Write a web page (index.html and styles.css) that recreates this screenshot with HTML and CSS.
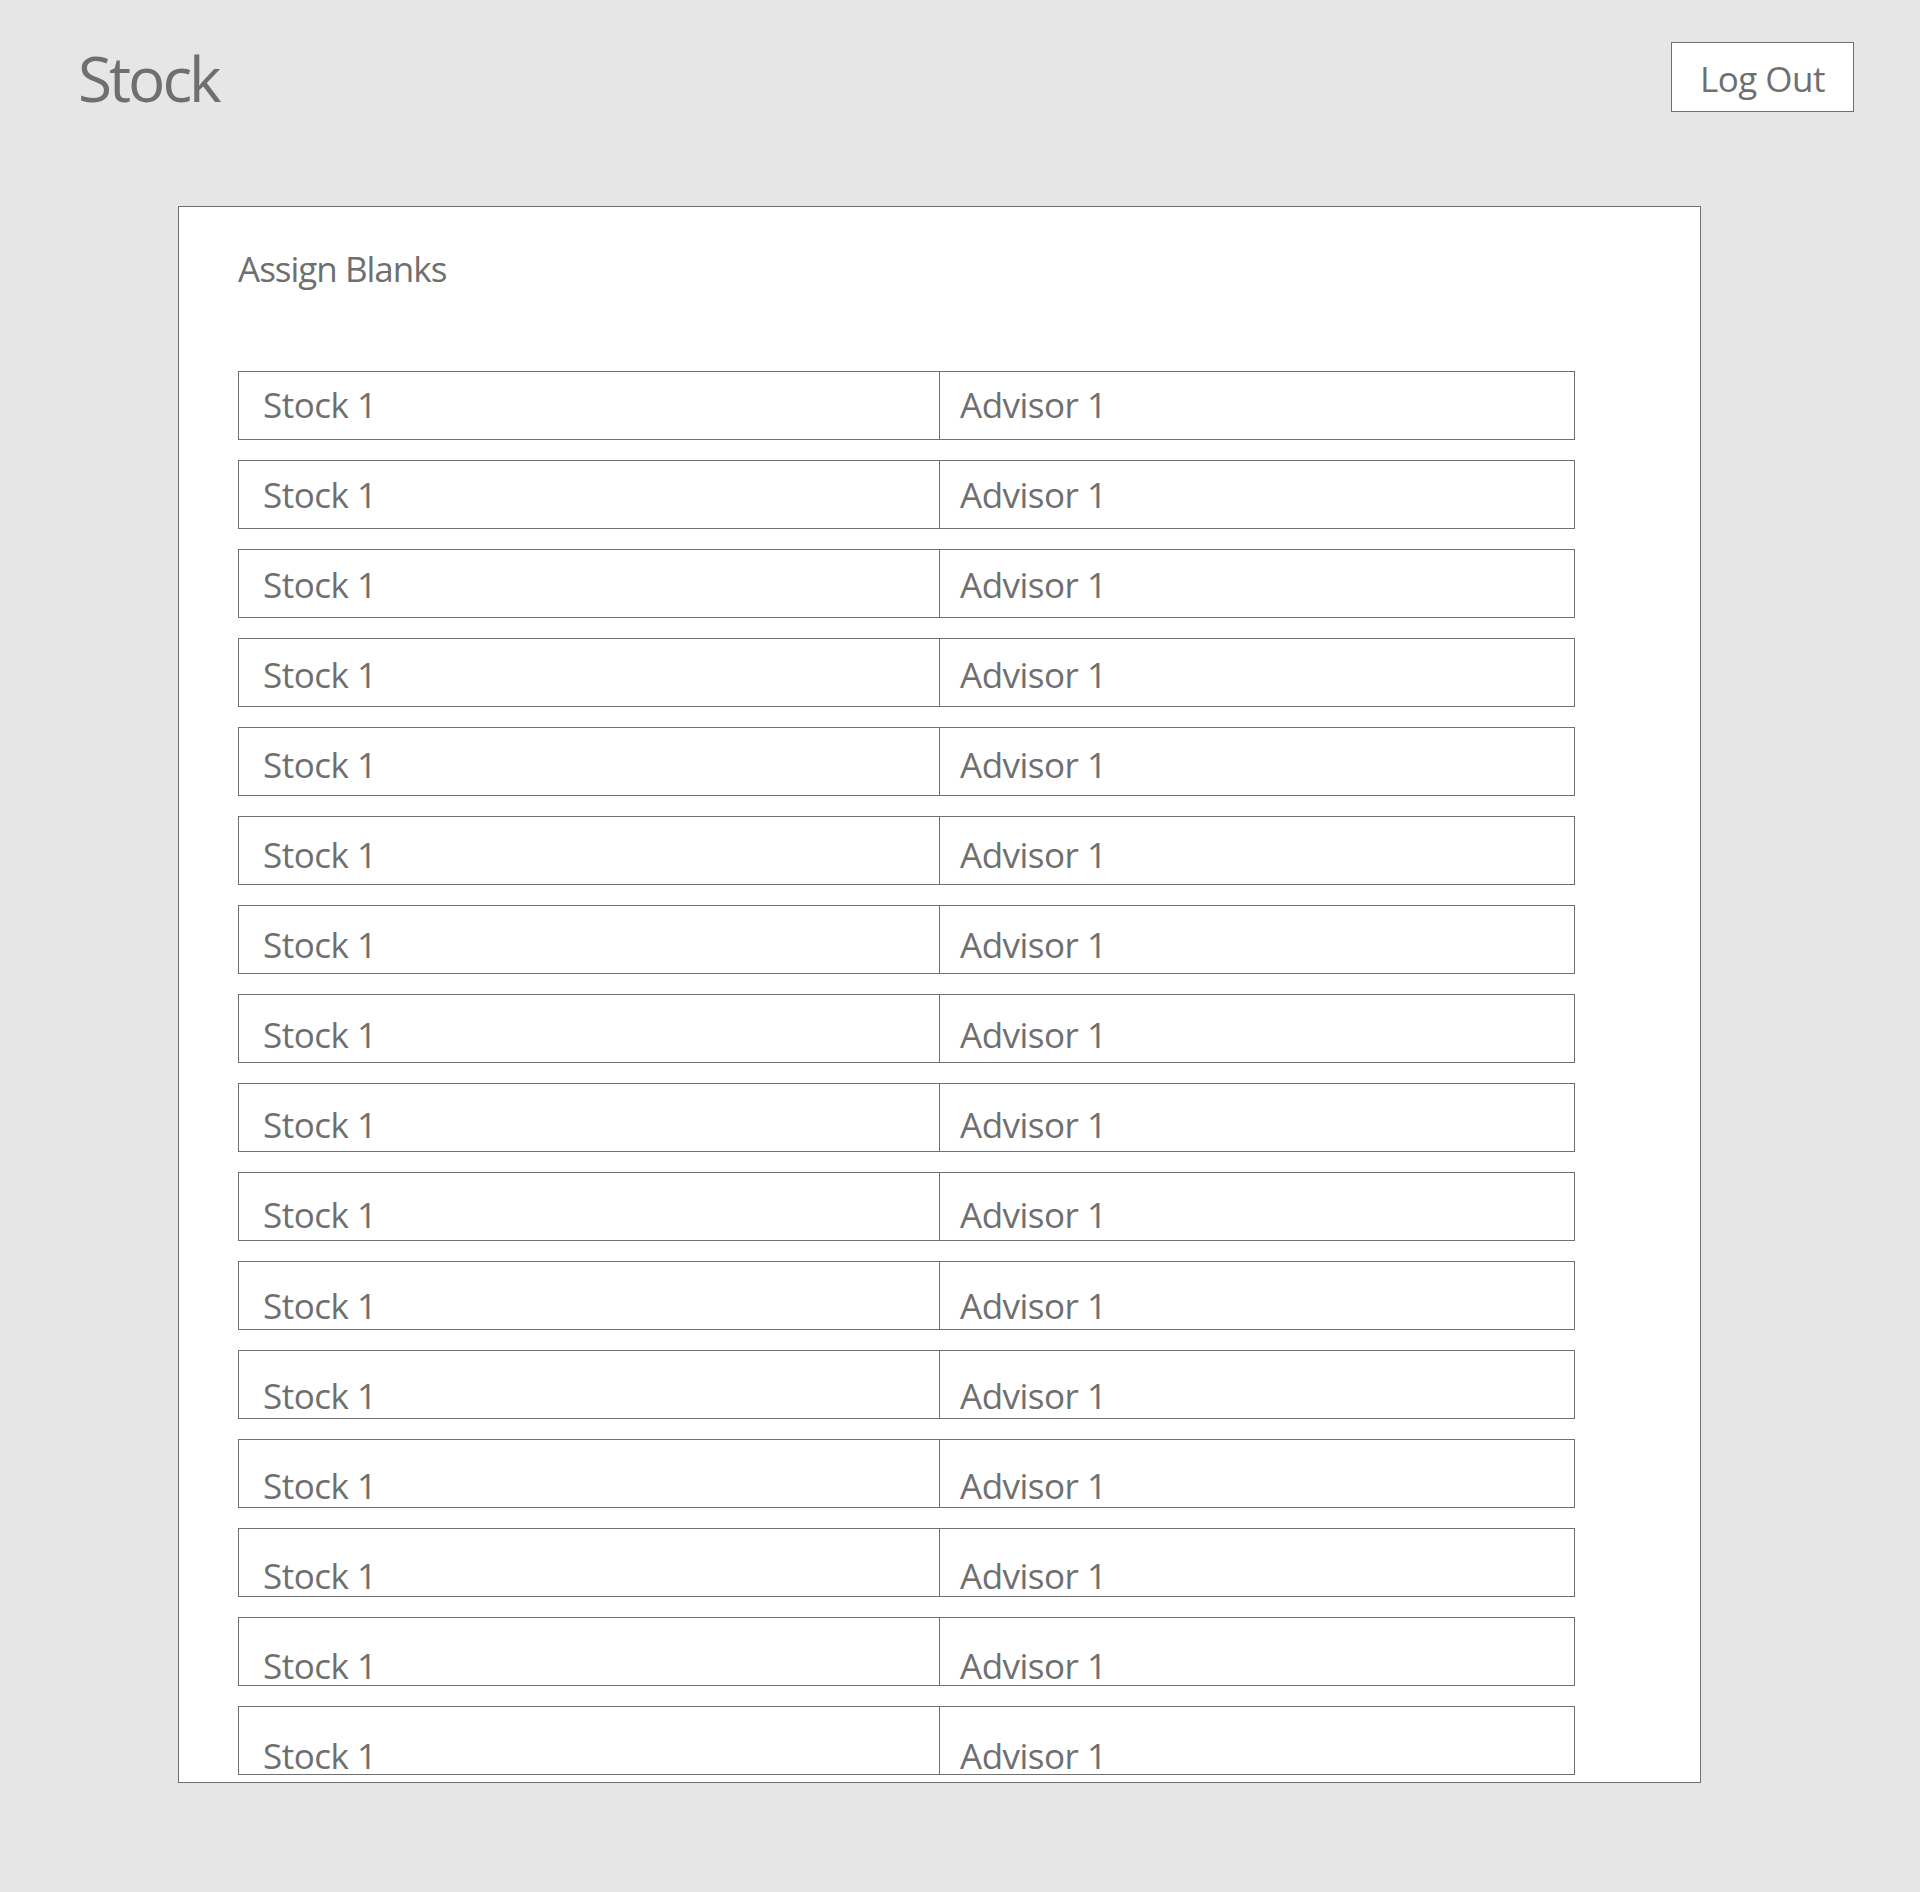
FILE: index.html
```html
<!DOCTYPE html>
<html lang="en">
<head>
<meta charset="utf-8">
<title>Stock</title>
<link rel="stylesheet" href="styles.css">
</head>
<body>
<header class="topbar">
  <h1 class="brand">Stock</h1>
  <button class="logout" type="button">Log Out</button>
</header>
<main class="panel">
  <h2 class="panel-title">Assign Blanks</h2>
  <div class="rows">
    <div class="row" style="--i:0"><div class="cell cell-stock">Stock 1</div><div class="cell cell-advisor">Advisor 1</div></div>
    <div class="row" style="--i:1"><div class="cell cell-stock">Stock 1</div><div class="cell cell-advisor">Advisor 1</div></div>
    <div class="row" style="--i:2"><div class="cell cell-stock">Stock 1</div><div class="cell cell-advisor">Advisor 1</div></div>
    <div class="row" style="--i:3"><div class="cell cell-stock">Stock 1</div><div class="cell cell-advisor">Advisor 1</div></div>
    <div class="row" style="--i:4"><div class="cell cell-stock">Stock 1</div><div class="cell cell-advisor">Advisor 1</div></div>
    <div class="row" style="--i:5"><div class="cell cell-stock">Stock 1</div><div class="cell cell-advisor">Advisor 1</div></div>
    <div class="row" style="--i:6"><div class="cell cell-stock">Stock 1</div><div class="cell cell-advisor">Advisor 1</div></div>
    <div class="row" style="--i:7"><div class="cell cell-stock">Stock 1</div><div class="cell cell-advisor">Advisor 1</div></div>
    <div class="row" style="--i:8"><div class="cell cell-stock">Stock 1</div><div class="cell cell-advisor">Advisor 1</div></div>
    <div class="row" style="--i:9"><div class="cell cell-stock">Stock 1</div><div class="cell cell-advisor">Advisor 1</div></div>
    <div class="row" style="--i:10"><div class="cell cell-stock">Stock 1</div><div class="cell cell-advisor">Advisor 1</div></div>
    <div class="row" style="--i:11"><div class="cell cell-stock">Stock 1</div><div class="cell cell-advisor">Advisor 1</div></div>
    <div class="row" style="--i:12"><div class="cell cell-stock">Stock 1</div><div class="cell cell-advisor">Advisor 1</div></div>
    <div class="row" style="--i:13"><div class="cell cell-stock">Stock 1</div><div class="cell cell-advisor">Advisor 1</div></div>
    <div class="row" style="--i:14"><div class="cell cell-stock">Stock 1</div><div class="cell cell-advisor">Advisor 1</div></div>
    <div class="row" style="--i:15"><div class="cell cell-stock">Stock 1</div><div class="cell cell-advisor">Advisor 1</div></div>
  </div>
</main>
</body>
</html>
```
FILE: styles.css
```css
* {
  box-sizing: border-box;
}

body {
  margin: 0;
  background: #e6e6e6;
  font-family: "Open Sans", "Noto Sans", sans-serif;
  color: #6f6f6f;
}

.topbar {
  display: flex;
  justify-content: space-between;
  align-items: flex-start;
  padding: 42px 66px 0 78px;
}

.brand {
  margin: 5px 0 0;
  font-size: 62px;
  line-height: 62px;
  font-weight: 400;
  letter-spacing: -3px;
}

.logout {
  width: 183px;
  height: 70px;
  padding: 3px 0 0;
  border: 1px solid #707070;
  background: #fff;
  color: #6f6f6f;
  font-family: inherit;
  font-size: 35px;
  line-height: 35px;
  letter-spacing: -0.5px;
}

.panel {
  display: block;
  width: 1523px;
  margin: 94px 0 0 178px;
  padding: 44px 0 7px 59px;
  background: #fff;
  border: 1px solid #707070;
}

.panel-title {
  margin: 0 0 85px 0;
  font-size: 35px;
  line-height: 35px;
  font-weight: 400;
  letter-spacing: -1px;
}

.rows {
  display: flex;
  flex-direction: column;
  gap: 20px;
}

.row {
  display: flex;
  width: 1337px;
  height: 69px;
  border: 1px solid #707070;
}

.cell {
  font-size: 35px;
  line-height: 35px;
  letter-spacing: -0.5px;
  padding-top: calc(15px + var(--i) * 1.05px);
  white-space: nowrap;
}

.cell-stock {
  width: 701px;
  flex: none;
  padding-left: 24px;
  border-right: 1px solid #707070;
}

.cell-advisor {
  flex: 1;
  padding-left: 20px;
}
```
